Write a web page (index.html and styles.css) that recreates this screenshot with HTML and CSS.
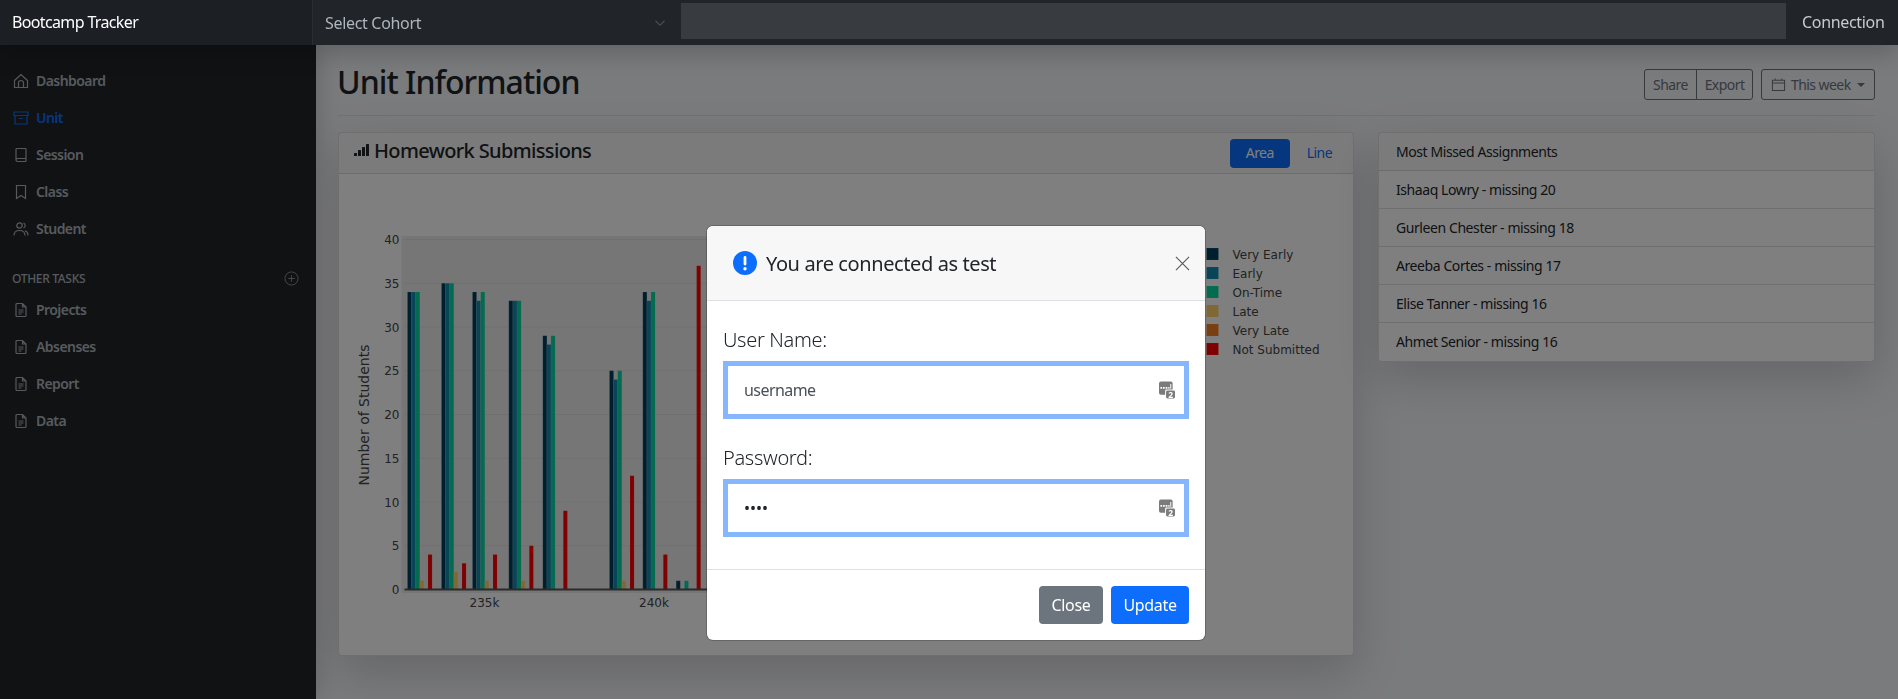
FILE: index.html
```html
<!DOCTYPE html>
<html lang="en">
<head>
<meta charset="utf-8">
<title>Bootcamp Tracker</title>
<link rel="stylesheet" href="styles.css">
</head>
<body>
<header class="topbar">
  <a class="brand">Bootcamp Tracker</a>
  <div class="cohort">
    <span>Select Cohort</span>
    <svg class="chev" viewBox="0 0 16 16"><path d="M2 5l6 6 6-6"/></svg>
  </div>
  <div class="search"></div>
  <a class="connection">Connection</a>
</header>
<div class="layout">
  <nav class="sidebar">
    <ul class="nav">
      <li class="nav-item"><svg class="ico" viewBox="0 0 16 16"><path d="M1.500 7.500 8 1.500l6.500 6v7h-13zM5.500 14.500V10a2.500 2.500 0 0 1 5 0v4.500"/></svg>Dashboard</li>
      <li class="nav-item active"><svg class="ico" viewBox="0 0 16 16"><path d="M1 2h14v3.500H1zM2 5.500V14h12V5.500M6 8.500h4"/></svg>Unit</li>
      <li class="nav-item"><svg class="ico" viewBox="0 0 16 16"><path d="M3 2.500a1 1 0 0 1 1-1h8.500a.5.5 0 0 1 .5.5v12a.5.5 0 0 1-.5.5H4.500A1.500 1.500 0 0 1 3 13zM3 13a1.500 1.500 0 0 1 1.500-1.500H13"/></svg>Session</li>
      <li class="nav-item"><svg class="ico" viewBox="0 0 16 16"><path d="M3.500 1.500h9v13L8 11.500l-4.500 3z"/></svg>Class</li>
      <li class="nav-item"><svg class="ico" viewBox="0 0 16 16"><circle cx="6.500" cy="4.500" r="2.700"/><path d="M1 14.500c0-3.500 2-5 5.500-5s5.500 1.500 5.500 5M10.500 2a2.700 2.700 0 0 1 0 5M12 9.800c2 .5 3 2 3 4.700"/></svg>Student</li>
    </ul>
    <div class="nav-heading"><span>Other Tasks</span><svg class="plus" viewBox="0 0 16 16"><circle cx="8" cy="8" r="7"/><path d="M8 4.500v7M4.500 8h7"/></svg></div>
    <ul class="nav">
      <li class="nav-item"><svg class="ico" viewBox="0 0 16 16"><path d="M3 2.500a1 1 0 0 1 1-1h5.500L13 5v8.500a1 1 0 0 1-1 1H4a1 1 0 0 1-1-1zM9.500 1.500V5H13M5.500 8h5M5.500 10h5M5.500 12h3"/></svg>Projects</li>
      <li class="nav-item"><svg class="ico" viewBox="0 0 16 16"><path d="M3 2.500a1 1 0 0 1 1-1h5.500L13 5v8.500a1 1 0 0 1-1 1H4a1 1 0 0 1-1-1zM9.500 1.500V5H13M5.500 8h5M5.500 10h5M5.500 12h3"/></svg>Absenses</li>
      <li class="nav-item"><svg class="ico" viewBox="0 0 16 16"><path d="M3 2.500a1 1 0 0 1 1-1h5.500L13 5v8.500a1 1 0 0 1-1 1H4a1 1 0 0 1-1-1zM9.500 1.500V5H13M5.500 8h5M5.500 10h5M5.500 12h3"/></svg>Report</li>
      <li class="nav-item"><svg class="ico" viewBox="0 0 16 16"><path d="M3 2.500a1 1 0 0 1 1-1h5.500L13 5v8.500a1 1 0 0 1-1 1H4a1 1 0 0 1-1-1zM9.500 1.500V5H13M5.500 8h5M5.500 10h5M5.500 12h3"/></svg>Data</li>
    </ul>
  </nav>
  <main class="main">
    <div class="page-head">
      <h1 class="page-title">Unit Information</h1>
      <div class="tools">
        <div class="btn-group"><button class="tool share">Share</button><button class="tool export">Export</button></div>
        <button class="tool week"><svg class="cal" viewBox="0 0 16 16"><path d="M1.500 3.500h13v11h-13zM1.500 6.500h13M4.500 1.500v2M11.500 1.500v2"/></svg>This week<i class="caret"></i></button>
      </div>
    </div>
    <div class="cards">
      <section class="card chart-card">
        <div class="card-head">
          <h2 class="card-title"><svg class="rec" viewBox="0 0 16 16"><path d="M0 11.500a.5.5 0 0 1 .5-.5h2a.5.5 0 0 1 .5.5v2a.5.5 0 0 1-.5.5h-2a.5.5 0 0 1-.5-.5zm4-3a.5.5 0 0 1 .5-.5h2a.5.5 0 0 1 .5.5v5a.5.5 0 0 1-.5.5h-2a.5.5 0 0 1-.5-.5zm4-3a.5.5 0 0 1 .5-.5h2a.5.5 0 0 1 .5.5v8a.5.5 0 0 1-.5.5h-2a.5.5 0 0 1-.5-.5zm4-3a.5.5 0 0 1 .5-.5h2a.5.5 0 0 1 .5.5v11a.5.5 0 0 1-.5.5h-2a.5.5 0 0 1-.5-.5z"/></svg>Homework Submissions</h2>
          <div class="pills"><span class="pill on">Area</span><span class="pill">Line</span></div>
        </div>
        <svg class="chart" viewBox="339 174 1013 481">
          <rect class="plot" x="401" y="236" width="800" height="357"/>
          <g class="grid">
            <path d="M404 239.500H1195M404 283.250H1195M404 327H1195M404 370.750H1195M404 414.500H1195M404 458.250H1195M404 502H1195M404 545.750H1195"/>
          </g>
          <g class="bar c1">
            <rect x="407" y="292" width="4.100" height="297.500"/><rect x="441" y="283.250" width="4.100" height="306.250"/><rect x="472" y="292" width="4.100" height="297.500"/><rect x="508.300" y="300.750" width="4.100" height="288.750"/><rect x="542.300" y="335.750" width="4.100" height="253.750"/><rect x="609" y="370.750" width="4.100" height="218.750"/><rect x="642.300" y="292" width="4.100" height="297.500"/><rect x="675.700" y="580.750" width="4.100" height="8.750"/>
          </g>
          <g class="bar c2">
            <rect x="411.100" y="292" width="4.100" height="297.500"/><rect x="445.100" y="283.250" width="4.100" height="306.250"/><rect x="476.100" y="300.750" width="4.100" height="288.750"/><rect x="512.400" y="300.750" width="4.100" height="288.750"/><rect x="546.400" y="344.500" width="4.100" height="245"/><rect x="613.100" y="379.500" width="4.100" height="210"/><rect x="646.400" y="300.750" width="4.100" height="288.750"/>
          </g>
          <g class="bar c3">
            <rect x="415.200" y="292" width="4.100" height="297.500"/><rect x="449.200" y="283.250" width="4.100" height="306.250"/><rect x="480.200" y="292" width="4.100" height="297.500"/><rect x="516.500" y="300.750" width="4.100" height="288.750"/><rect x="550.500" y="335.750" width="4.100" height="253.750"/><rect x="617.200" y="370.750" width="4.100" height="218.750"/><rect x="650.500" y="292" width="4.100" height="297.500"/><rect x="683.900" y="580.750" width="4.100" height="8.750"/>
          </g>
          <g class="bar c4">
            <rect x="419.300" y="580.750" width="4.100" height="8.750"/><rect x="453.300" y="572" width="4.100" height="17.500"/><rect x="484.300" y="580.750" width="4.100" height="8.750"/><rect x="520.600" y="580.750" width="4.100" height="8.750"/><rect x="621.300" y="580.750" width="4.100" height="8.750"/>
          </g>
          <g class="bar c6">
            <rect x="427.500" y="554.500" width="4.100" height="35"/><rect x="461.500" y="563.250" width="4.100" height="26.250"/><rect x="492.500" y="554.500" width="4.100" height="35"/><rect x="528.800" y="545.750" width="4.100" height="43.750"/><rect x="562.800" y="510.750" width="4.100" height="78.750"/><rect x="629.500" y="475.750" width="4.100" height="113.750"/><rect x="662.800" y="554.500" width="4.100" height="35"/><rect x="696.100" y="265.750" width="4.100" height="323.750"/>
          </g>
          <path class="axis" d="M404 589.500H1195"/>
          <g class="ticks">
            <text x="399" y="244">40</text><text x="399" y="288">35</text><text x="399" y="332">30</text><text x="399" y="375">25</text><text x="399" y="419">20</text><text x="399" y="463">15</text><text x="399" y="507">10</text><text x="399" y="550">5</text><text x="399" y="594">0</text>
          </g>
          <g class="xticks"><text x="484" y="607">235k</text><text x="653.500" y="607">240k</text></g>
          <text class="ylabel" transform="translate(368 415) rotate(-90)">Number of Students</text>
          <g class="legend">
            <rect class="c1" x="1206" y="248" width="12" height="12"/><text x="1232" y="259">Very Early</text>
            <rect class="c2" x="1206" y="267" width="12" height="12"/><text x="1232" y="278">Early</text>
            <rect class="c3" x="1206" y="286" width="12" height="12"/><text x="1232" y="297">On-Time</text>
            <rect class="c4" x="1206" y="305" width="12" height="12"/><text x="1232" y="316">Late</text>
            <rect class="c5" x="1206" y="324" width="12" height="12"/><text x="1232" y="335">Very Late</text>
            <rect class="c6" x="1206" y="343" width="12" height="12"/><text x="1232" y="354">Not Submitted</text>
          </g>
        </svg>
      </section>
      <ul class="card list-card">
        <li class="row">Most Missed Assignments</li>
        <li class="row">Ishaaq Lowry - missing 20</li>
        <li class="row">Gurleen Chester - missing 18</li>
        <li class="row">Areeba Cortes - missing 17</li>
        <li class="row">Elise Tanner - missing 16</li>
        <li class="row">Ahmet Senior - missing 16</li>
      </ul>
    </div>
  </main>
</div>
<div class="backdrop"></div>
<div class="modal">
  <div class="modal-head">
    <svg class="alert" viewBox="0 0 24 24"><circle cx="12" cy="12" r="12"/><rect x="10.600" y="5" width="2.800" height="9.500" rx="1.400"/><circle class="dot" cx="12" cy="17.700" r="1.700"/></svg>
    <h3 class="modal-title">You are connected as test</h3>
    <svg class="close" viewBox="0 0 16 16"><path d="M1 1l14 14M15 1L1 15"/></svg>
  </div>
  <form class="modal-body">
    <label class="label">User Name:</label>
    <div class="field">
      <input class="input" type="text" value="username">
      <svg class="pm" viewBox="0 0 17 18"><rect x="0" y="0" width="14.500" height="14" rx="2"/><rect class="cut" x="6.500" y="8.500" width="10.500" height="9.500" rx="1.500"/><rect x="7.500" y="9.500" width="9.500" height="8.500" rx="1.500"/><path class="pm-w" d="M1.500 5.800h1.800v1.800H1.500zM4.300 5.800h1.800v1.800H4.300zM7.100 5.800h1.800v1.800H7.100zM9.900 5.800h1.300v1.800H9.900zM12 2.500h1v5.100h-1z"/><text class="pm-n" x="12.300" y="17">2</text></svg>
    </div>
    <label class="label">Password:</label>
    <div class="field">
      <input class="input" type="password" value="test">
      <svg class="pm" viewBox="0 0 17 18"><rect x="0" y="0" width="14.500" height="14" rx="2"/><rect class="cut" x="6.500" y="8.500" width="10.500" height="9.500" rx="1.500"/><rect x="7.500" y="9.500" width="9.500" height="8.500" rx="1.500"/><path class="pm-w" d="M1.500 5.800h1.800v1.800H1.500zM4.300 5.800h1.800v1.800H4.300zM7.100 5.800h1.800v1.800H7.100zM9.900 5.800h1.300v1.800H9.900zM12 2.500h1v5.100h-1z"/><text class="pm-n" x="12.300" y="17">2</text></svg>
    </div>
  </form>
  <div class="modal-foot">
    <button class="btn gray">Close</button>
    <button class="btn blue">Update</button>
  </div>
</div>
</body>
</html>
```
FILE: styles.css
```css
* { box-sizing: border-box; }
html, body { margin: 0; height: 100%; overflow: hidden; }
body { font-family: "Noto Sans", "Open Sans", sans-serif; font-size: 16px; letter-spacing: -0.02em; color: #212529; background: #f5f6fa; }
ul { list-style: none; margin: 0; padding: 0; }
button { font: inherit; letter-spacing: inherit; }

.topbar { position: relative; z-index: 20; display: flex; height: 45px; background: #212529; box-shadow: 0 8px 24px rgba(0,0,0,.2); }
.brand { width: 312px; padding: 0 12px; line-height: 44px; color: #fff; background: #1c1f24; letter-spacing: -0.04em; }
.cohort { width: 369px; padding: 0 12px; display: flex; align-items: center; justify-content: space-between; color: #adb5bd; border-left: 1px solid #2b2f33; }
.chev { width: 12px; height: 12px; fill: none; stroke: #4a4e53; stroke-width: 1.5; margin-right: 3px; }
.search { flex: 1; margin: 3px 0 6px; background: #383b3f; }
.connection { width: 112px; padding-left: 16px; line-height: 44px; color: #c8cacc; }

.layout { display: flex; height: 654px; }
.sidebar { width: 316px; flex: none; padding-top: 17px; background: #212529; box-shadow: 0 0 24px rgba(0,0,0,.2); position: relative; }
.nav-item { display: flex; align-items: center; gap: 7px; height: 37px; padding-left: 13px; font-size: 14px; font-weight: 600; letter-spacing: -0.04em; color: #adb5bd; }
.nav-item.active { color: #0d6efd; }
.ico { width: 16px; height: 16px; fill: none; stroke: currentColor; stroke-width: 1.2; }
.nav-heading { display: flex; justify-content: space-between; align-items: center; height: 18px; margin: 22px 0 4px; padding: 0 17px 0 12px; font-size: 12px; font-weight: 500; text-transform: uppercase; color: #adb5bd; }
.plus { width: 15px; height: 15px; fill: none; stroke: #8a9198; stroke-width: 1; }

.main { flex: 1; padding: 18px 23px 0 22px; min-width: 0; }
.page-head { display: flex; justify-content: space-between; align-items: flex-start; height: 53px; border-bottom: 1px solid #dee2e6; margin-bottom: 16px; }
.page-title { margin: 0 0 0 -1px; font-size: 32px; line-height: 38px; font-weight: 500; letter-spacing: -0.03em; }
.tools { display: flex; gap: 8px; margin-top: 6px; }
.btn-group { display: flex; }
.tool { height: 31px; padding: 0; font-size: 14px; letter-spacing: -0.04em; color: #6c757d; background: transparent; border: 1px solid #6c757d; border-radius: 3px; }
.share { width: 53px; }
.export { width: 57px; }
.btn-group .tool:first-child { border-radius: 3px 0 0 3px; }
.btn-group .tool:last-child { border-radius: 0 3px 3px 0; margin-left: -1px; }
.week { display: flex; align-items: center; width: 114px; padding: 0 9px; white-space: nowrap; }
.cal { flex: none; width: 15px; height: 15px; margin-right: 5px; fill: none; stroke: currentColor; stroke-width: 1.1; }
.caret { margin-left: 6px; border: 4px solid transparent; border-top-color: currentColor; border-bottom: 0; }

.cards { display: flex; gap: 24px; align-items: flex-start; }
.card { background: #fff; border: 1px solid rgba(0,0,0,.125); border-radius: 4px; box-shadow: 0 16px 48px rgba(0,0,0,.175); }
.chart-card { width: 1016px; height: 524px; }
.card-head { display: flex; justify-content: space-between; align-items: center; height: 41px; padding: 0 16px 0 15px; background: rgba(0,0,0,.03); border-bottom: 1px solid rgba(0,0,0,.125); }
.card-title { margin: -6px 0 0; display: flex; align-items: center; gap: 4px; font-size: 20px; font-weight: 500; letter-spacing: -0.032em; }
.rec { width: 16px; height: 16px; fill: #212529; }
.pills { display: flex; gap: 17px; margin-right: 5px; margin-top: 1px; }
.pill { height: 29px; line-height: 28px; text-align: center; font-size: 14px; letter-spacing: -0.04em; color: #0d6efd; border-radius: 4px; }
.pill.on { width: 60px; color: #fff; background: #0d6efd; }
.chart { display: block; width: 1014px; height: 481px; font-family: "DejaVu Sans", sans-serif; letter-spacing: 0; }
.plot { fill: rgba(0,0,0,.07); }
.grid path { fill: none; stroke: rgba(0,0,0,.06); }
.bar rect, .legend rect { stroke: rgba(255,255,255,.1); stroke-width: 1; }
.c1, .c1 rect { fill: #003f5c; }
.c2, .c2 rect { fill: #118ab2; }
.c3, .c3 rect { fill: #06d6a0; }
.c4, .c4 rect { fill: #ffd166; }
.c5, .c5 rect { fill: #f37e20; }
.c6, .c6 rect { fill: #ff0000; }
.axis { fill: none; stroke: #555; stroke-width: 2; }
.ticks text { font-size: 12px; text-anchor: end; fill: #444; }
.xticks text { font-size: 12px; text-anchor: middle; fill: #444; }
.ylabel { font-size: 14px; text-anchor: middle; fill: #444; }
.legend text { font-size: 12px; fill: #444; }

.list-card { width: 497px; }
.row { height: 38px; line-height: 37px; padding: 0 17px; font-size: 14px; letter-spacing: -0.03em; border-bottom: 1px solid rgba(0,0,0,.125); }
.row:first-child { background: rgba(0,0,0,.03); }
.row:last-child { border-bottom: 0; }

.backdrop { position: fixed; inset: 0; z-index: 10; background: rgba(0,0,0,.5); }
.modal { position: fixed; z-index: 30; left: 707px; top: 226px; width: 498px; background: #fff; border-radius: 6px; box-shadow: 0 0 0 1px rgba(0,0,0,.2); overflow: hidden; }
.modal-head { display: flex; align-items: center; height: 75px; padding: 0 15px 0 26px; background: #f7f7f7; border-bottom: 1px solid #dee2e6; }
.alert { width: 24px; height: 24px; margin-right: 9px; fill: #0d6efd; }
.alert rect, .alert .dot { fill: #fff; }
.modal-title { flex: 1; margin: 0; font-size: 20px; font-weight: 400; letter-spacing: -0.02em; }
.close { width: 15px; height: 15px; fill: none; stroke: #55595d; stroke-width: 1.2; }
.modal-body { padding: 24px 16px 32px; }
.label { display: block; height: 30px; line-height: 30px; margin-bottom: 6px; font-size: 20px; font-weight: 300; }
.field { position: relative; margin-bottom: 24px; }
.field:last-child { margin-bottom: 0; }
.input { display: block; width: 100%; height: 58px; padding: 0 40px 0 16px; font: inherit; letter-spacing: -0.035em; color: #495057; background: #fff; border: 5px solid #86b7fe; border-radius: 0; outline: 0; }
.input[type="password"] { color: #212529; letter-spacing: 0; }
.pm { position: absolute; right: 14px; top: 20px; width: 16px; height: 18px; fill: #7b7b7b; }
.pm .cut { fill: #fff; }
.pm .pm-w { fill: #fff; }
.pm .pm-n { fill: #fff; font-size: 9px; font-weight: 700; text-anchor: middle; letter-spacing: 0; }
.modal-foot { display: flex; justify-content: flex-end; gap: 8px; height: 71px; padding: 16px; border-top: 1px solid #dee2e6; }
.btn { height: 38px; padding: 0 12px; color: #fff; border: 0; border-radius: 4px; }
.btn.gray { width: 64px; background: #6c757d; }
.btn.blue { width: 78px; background: #0d6efd; }
```
